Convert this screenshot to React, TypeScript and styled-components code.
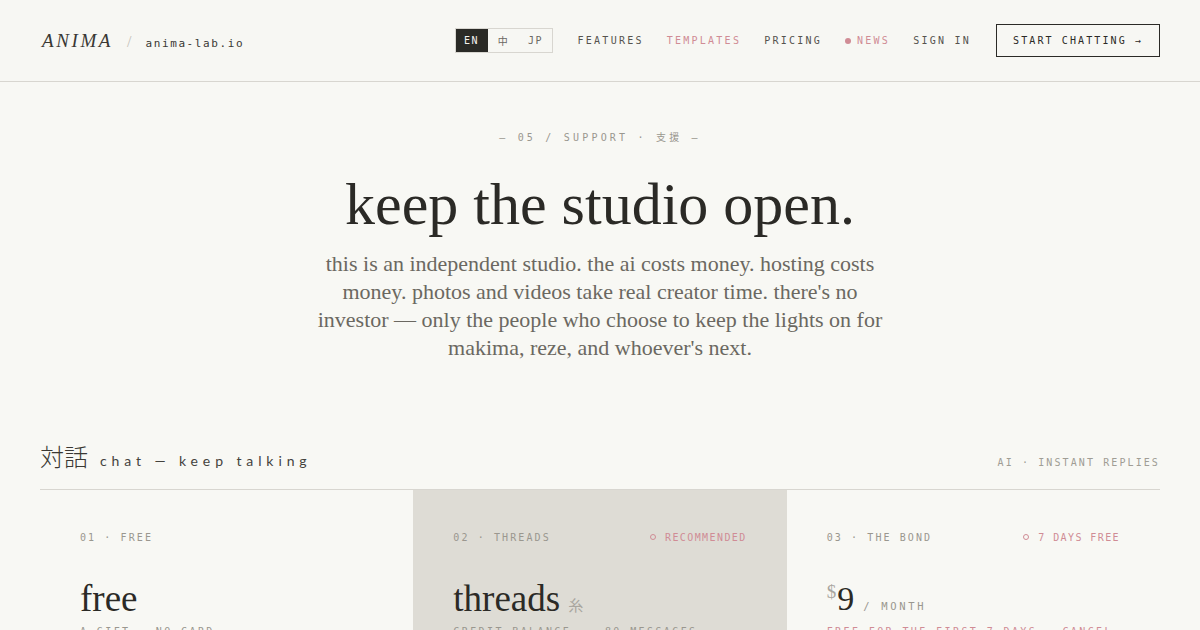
import React from "react";
import styled, { createGlobalStyle } from "styled-components";

const MONO = `"DejaVu Sans Mono", "Liberation Mono", monospace`;
const SERIF = `"Liberation Serif", "Noto Sans CJK JP", serif`;
const INK = "#2b2a26";
const PINK = "#d08c95";
const LINE = "#d8d6d0";

const Global = createGlobalStyle`
  html, body { margin: 0; padding: 0; background: #f8f8f4; }
  body { font-family: ${SERIF}; color: ${INK}; }
  * { box-sizing: border-box; }
`;

const Header = styled.header`
  height: 82px;
  padding: 0 40px;
  display: flex;
  align-items: center;
  justify-content: space-between;
  border-bottom: 1px solid ${LINE};
  background: #f7f7f3;
`;

const Brand = styled.div`
  display: flex;
  align-items: baseline;
  gap: 14px;
`;

const Logo = styled.span`
  font-family: ${SERIF};
  font-style: italic;
  font-size: 19px;
  letter-spacing: 2.6px;
  color: #3a3833;
  padding-left: 2px;
`;

const Slash = styled.span`
  font-family: ${SERIF};
  font-size: 16px;
  color: #c4c1ba;
`;

const Domain = styled.span`
  font-family: ${MONO};
  font-size: 11px;
  letter-spacing: 1.6px;
  color: #3a3833;
`;

const Nav = styled.nav`
  display: flex;
  align-items: center;
  gap: 23px;
`;

const LangSwitch = styled.div`
  display: flex;
  border: 1px solid ${LINE};
  height: 25px;
  margin-right: 2px;
`;

const Lang = styled.span<{ $active?: boolean }>`
  display: flex;
  align-items: center;
  justify-content: center;
  width: 32px;
  font-family: ${MONO}, "Noto Sans CJK JP";
  font-size: 10px;
  letter-spacing: 1.5px;
  color: ${(p) => (p.$active ? "#f3f2ee" : "#6a6862")};
  background: ${(p) => (p.$active ? "#2a2a26" : "transparent")};
`;

const NavLink = styled.a<{ $accent?: boolean }>`
  display: flex;
  align-items: center;
  gap: 6px;
  font-family: ${MONO};
  font-size: 10px;
  letter-spacing: 2.25px;
  color: ${(p) => (p.$accent ? PINK : "#55534e")};
  text-decoration: none;
`;

const Dot = styled.span`
  width: 6px;
  height: 6px;
  border-radius: 50%;
  background: ${PINK};
`;

const CtaButton = styled.button`
  height: 33px;
  padding: 0 16px;
  margin-left: 2px;
  border: 1px solid ${INK};
  background: transparent;
  font-family: ${MONO};
  font-size: 10px;
  letter-spacing: 2.1px;
  color: ${INK};
`;

const Hero = styled.section`
  display: flex;
  flex-direction: column;
  align-items: center;
  padding-top: 49px;
  text-align: center;
`;

const Eyebrow = styled.div`
  font-family: ${MONO}, "Noto Sans CJK JP";
  font-size: 10px;
  line-height: 14px;
  letter-spacing: 3.2px;
  color: #9a978f;
`;

const Title = styled.h1`
  margin: 27px 0 0;
  font-family: ${SERIF};
  font-weight: 400;
  font-size: 60px;
  line-height: 64px;
  color: ${INK};
`;

const Lede = styled.p`
  margin: 14px 0 0;
  max-width: 572px;
  font-family: ${SERIF};
  font-size: 22px;
  line-height: 28px;
  color: #6b6861;
`;

const Plans = styled.section`
  padding: 76px 40px 0;
`;

const PlansHead = styled.div`
  display: flex;
  align-items: baseline;
  justify-content: space-between;
  padding-bottom: 16px;
  border-bottom: 1px solid ${LINE};
`;

const HeadLeft = styled.div`
  display: flex;
  align-items: baseline;
  gap: 12px;
`;

const Kanji = styled.span`
  font-family: "Noto Sans CJK JP", sans-serif;
  font-weight: 300;
  font-size: 24px;
  color: #3a3833;
`;

const HeadTitle = styled.span`
  font-family: Lato, "Liberation Sans", sans-serif;
  font-size: 14px;
  letter-spacing: 4.9px;
  color: #44423d;
`;

const HeadNote = styled.span`
  font-family: ${MONO};
  font-size: 10px;
  letter-spacing: 2.1px;
  color: #a09d95;
`;

const Grid = styled.div`
  display: grid;
  grid-template-columns: repeat(3, 1fr);
`;

const Card = styled.article<{ $featured?: boolean }>`
  padding: 40px 40px 0;
  min-height: 160px;
  background: ${(p) => (p.$featured ? "#dedcd5" : "transparent")};
`;

const CardTop = styled.div`
  display: flex;
  justify-content: space-between;
  align-items: center;
  height: 14px;
`;

const Label = styled.span<{ $accent?: boolean }>`
  display: flex;
  align-items: center;
  gap: 9px;
  font-family: ${MONO};
  font-size: 10px;
  letter-spacing: ${(p) => (p.$accent ? "1.4px" : "2.1px")};
  color: ${(p) => (p.$accent ? PINK : "#9a978f")};
`;

const Ring = styled.span`
  width: 6px;
  height: 6px;
  border-radius: 50%;
  border: 1px solid ${PINK};
`;

const PlanName = styled.div`
  display: flex;
  align-items: baseline;
  gap: 8px;
  margin-top: 34px;
  height: 42px;
  font-family: ${SERIF};
  font-size: 37px;
  line-height: 42px;
  color: ${INK};
`;

const Price = styled.span`
  font-size: 34px;
`;

const Glyph = styled.span`
  font-family: "Noto Sans CJK JP", sans-serif;
  font-size: 15px;
  color: #a9a69f;
`;

const Currency = styled.sup`
  font-size: 19px;
  line-height: 0;
  color: #a9a69f;
  vertical-align: 12px;
  margin-right: 1px;
`;

const Per = styled.span`
  font-family: ${MONO};
  font-size: 10.5px;
  letter-spacing: 2.7px;
  color: #9a978f;
  margin-left: 1px;
`;

const PlanNote = styled.div<{ $accent?: boolean }>`
  margin-top: 6px;
  font-family: ${MONO};
  font-size: 10px;
  letter-spacing: 2.4px;
  color: ${(p) => (p.$accent ? PINK : "#9a978f")};
`;

export default function App() {
  return (
    <>
      <Global />
      <Header>
        <Brand>
          <Logo>ANIMA</Logo>
          <Slash>/</Slash>
          <Domain>anima-lab.io</Domain>
        </Brand>
        <Nav>
          <LangSwitch>
            <Lang $active>EN</Lang>
            <Lang>中</Lang>
            <Lang>JP</Lang>
          </LangSwitch>
          <NavLink>FEATURES</NavLink>
          <NavLink $accent>TEMPLATES</NavLink>
          <NavLink>PRICING</NavLink>
          <NavLink $accent>
            <Dot />
            NEWS
          </NavLink>
          <NavLink>SIGN IN</NavLink>
          <CtaButton>START CHATTING →</CtaButton>
        </Nav>
      </Header>

      <Hero>
        <Eyebrow>— 05 / SUPPORT · 支援 —</Eyebrow>
        <Title>keep the studio open.</Title>
        <Lede>
          this is an independent studio. the ai costs money. hosting costs
          money. photos and videos take real creator time. there's no investor
          — only the people who choose to keep the lights on for makima, reze,
          and whoever's next.
        </Lede>
      </Hero>

      <Plans>
        <PlansHead>
          <HeadLeft>
            <Kanji>対話</Kanji>
            <HeadTitle>chat — keep talking</HeadTitle>
          </HeadLeft>
          <HeadNote>AI · INSTANT REPLIES</HeadNote>
        </PlansHead>
        <Grid>
          <Card>
            <CardTop>
              <Label>01 · FREE</Label>
            </CardTop>
            <PlanName>free</PlanName>
            <PlanNote>A GIFT · NO CARD</PlanNote>
          </Card>
          <Card $featured>
            <CardTop>
              <Label>02 · THREADS</Label>
              <Label $accent>
                <Ring />
                RECOMMENDED
              </Label>
            </CardTop>
            <PlanName>
              threads <Glyph>糸</Glyph>
            </PlanName>
            <PlanNote>CREDIT BALANCE · ~80 MESSAGES</PlanNote>
          </Card>
          <Card>
            <CardTop>
              <Label>03 · THE BOND</Label>
              <Label $accent>
                <Ring />7 DAYS FREE
              </Label>
            </CardTop>
            <PlanName>
              <Price>
                <Currency>$</Currency>9
              </Price>
              <Per>/ MONTH</Per>
            </PlanName>
            <PlanNote $accent>FREE FOR THE FIRST 7 DAYS · CANCEL ANYTIME</PlanNote>
          </Card>
        </Grid>
      </Plans>
    </>
  );
}
